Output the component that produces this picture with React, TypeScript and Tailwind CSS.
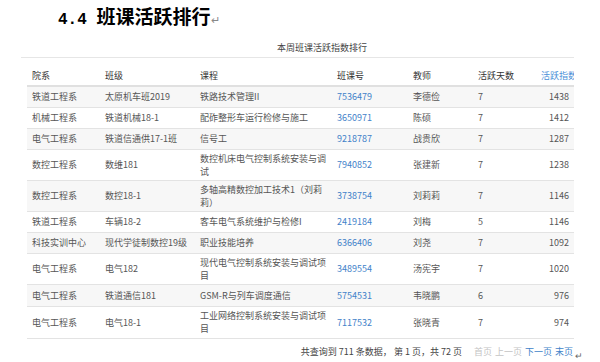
const rows = [
  { dept: "铁道工程系", cls: "太原机车班2019", course: "铁路技术管理II", no: "7536479", teacher: "李德俭", days: 7, score: 1438, h: "h-[21px]" },
  { dept: "机械工程系", cls: "铁道机械18-1", course: "配砟整形车运行检修与施工", no: "3650971", teacher: "陈硕", days: 7, score: 1412, h: "h-[21px]" },
  { dept: "电气工程系", cls: "铁道信通供17-1班", course: "信号工", no: "9218787", teacher: "战贵欣", days: 7, score: 1287, h: "h-[21px]" },
  { dept: "数控工程系", cls: "数维181", course: "数控机床电气控制系统安装与调试", no: "7940852", teacher: "张建新", days: 7, score: 1238, h: "h-[31px]" },
  { dept: "数控工程系", cls: "数控18-1", course: "多轴高精数控加工技术1（刘莉莉）", no: "3738754", teacher: "刘莉莉", days: 7, score: 1146, h: "h-[31px]" },
  { dept: "铁道工程系", cls: "车辆18-2", course: "客车电气系统维护与检修I", no: "2419184", teacher: "刘梅", days: 5, score: 1146, h: "h-[21px]" },
  { dept: "科技实训中心", cls: "现代学徒制数控19级", course: "职业技能培养", no: "6366406", teacher: "刘尧", days: 7, score: 1092, h: "h-[21px]" },
  { dept: "电气工程系", cls: "电气182", course: "现代电气控制系统安装与调试项目", no: "3489554", teacher: "汤宪宇", days: 7, score: 1020, h: "h-[31px]" },
  { dept: "电气工程系", cls: "铁道通信181", course: "GSM-R与列车调度通信", no: "5754531", teacher: "韦晓鹏", days: 6, score: 976, h: "h-[22px]" },
  { dept: "电气工程系", cls: "电气18-1", course: "工业网络控制系统安装与调试项目", no: "7117532", teacher: "张晓青", days: 7, score: 974, h: "h-[32px]" },
];

const font = "font-['Noto_Sans_CJK_SC','Noto_Sans',sans-serif]";

export default function App() {
  return (
    <div className={`w-[600px] h-[362px] bg-white overflow-hidden ${font}`}>
      {/* heading */}
      <div className="pl-[58px] pt-[5px] h-[36px] flex items-baseline text-black">
        <span className="font-['Liberation_Mono',monospace] font-bold text-[16px] whitespace-pre">4.4 </span>
        <span className="font-bold text-[19px] leading-[22px]">班课活跃排行</span>
        <span className="text-[11px] text-[#888] ml-[1px]">↵</span>
      </div>

      <div className="pl-[277px] pt-[6px] h-[21px] text-[9px] leading-[12px] text-[#444]">本周班课活跃指数排行</div>

      <div className="ml-[21px] w-[553px] border-t border-[#e6e6e6]">
        <div className="ml-[6px] w-[547px] overflow-hidden">
          <table className="w-[547px] table-fixed border-collapse text-[9px] leading-[13px] text-[#555]">
            <colgroup>
              <col className="w-[73px]" />
              <col className="w-[95px]" />
              <col className="w-[137px]" />
              <col className="w-[76px]" />
              <col className="w-[65px]" />
              <col className="w-[63px]" />
              <col className="w-[38px]" />
            </colgroup>
            <thead>
              <tr className="h-[28px] border-b-2 border-[#e0e0e0] text-[#333]">
                <th className="px-[5px] pb-[3px] align-bottom text-left font-normal">院系</th>
                <th className="px-[5px] pb-[3px] align-bottom text-left font-normal">班级</th>
                <th className="px-[5px] pb-[3px] align-bottom text-left font-normal">课程</th>
                <th className="px-[5px] pb-[3px] align-bottom text-left font-normal">班课号</th>
                <th className="px-[5px] pb-[3px] align-bottom text-left font-normal">教师</th>
                <th className="px-[5px] pb-[3px] align-bottom text-left font-normal">活跃天数</th>
                <th className="px-[5px] pb-[3px] align-bottom text-left font-normal whitespace-nowrap text-[#4a8fd8]">活跃指数</th>
              </tr>
            </thead>
            <tbody>
              {rows.map((r, i) => (
                <tr key={r.no} className={`${r.h} border-b border-[#e3e3e3] ${i % 2 === 0 ? "bg-[#f7f7f7]" : "bg-white"}`}>
                  <td className="px-[5px] align-middle">{r.dept}</td>
                  <td className="px-[5px] align-middle">{r.cls}</td>
                  <td className="px-[5px] align-middle">{r.course}</td>
                  <td className="px-[5px] align-middle text-[#3f82c9]">{r.no}</td>
                  <td className="px-[5px] align-middle">{r.teacher}</td>
                  <td className="px-[5px] align-middle">{r.days}</td>
                  <td className="px-[5px] align-middle text-right">{r.score}</td>
                </tr>
              ))}
            </tbody>
          </table>
        </div>
      </div>

      {/* pager */}
      <div className="mt-[7px] w-[583px] flex items-start justify-end text-[9px] leading-[12px]">
        <span className="text-[#444] whitespace-pre">共查询到 711 条数据， 第 1 页，共 72 页</span>
        <span className="ml-[12px] text-[#c4c4c4]">首页</span>
        <span className="ml-[3px] text-[#c4c4c4]">上一页</span>
        <span className="ml-[3px] text-[#3f82c9]">下一页</span>
        <span className="ml-[3px] text-[#3f82c9]">末页</span>
        <span className="ml-[2px] mt-[4px] text-[9px] text-[#666]">↵</span>
      </div>
    </div>
  );
}
